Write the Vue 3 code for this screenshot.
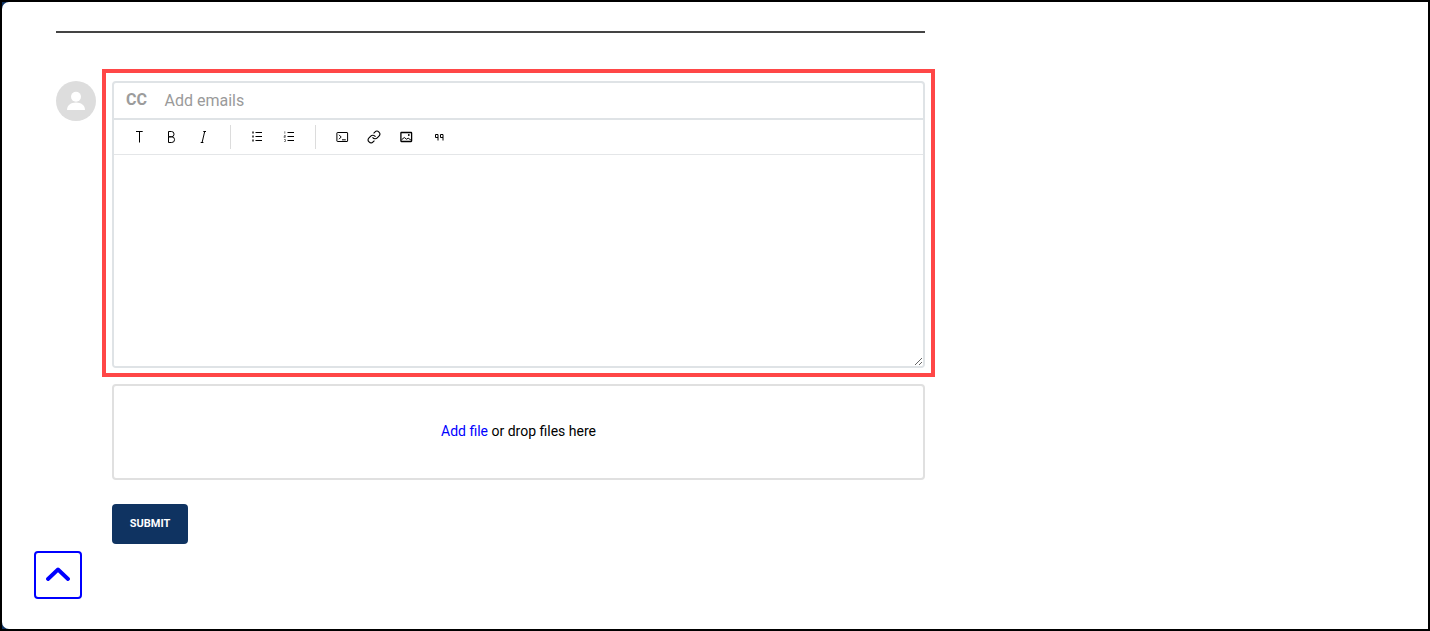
<script setup>
const groups = [
  ['t', 'b', 'i'],
  ['ul', 'ol'],
  ['code', 'link', 'image', 'quote']
]
</script>

<template>
  <div class="backdrop">
    <main class="page">
      <hr class="rule" />
      <section class="comment">
        <div class="avatar">
          <svg viewBox="0 0 40 40" width="40" height="40">
            <circle cx="20" cy="15.800" r="5" fill="#fff" />
            <path d="M11 29c0-4.800 4-7.500 9-7.500s9 2.700 9 7.500z" fill="#fff" />
          </svg>
        </div>
        <div class="body">
          <div class="highlight">
            <div class="editor">
              <div class="cc">
                <span class="cc-label">CC</span>
                <span class="cc-hint">Add emails</span>
              </div>
              <div class="composer">
                <div class="toolbar">
                  <div v-for="(group, g) in groups" :key="g" class="group">
                    <button v-for="name in group" :key="name" class="tool" type="button">
                      <svg v-if="name === 't'" viewBox="0 0 16 16" width="16" height="16"><path d="M5 2.500h6.700M8.500 2.500v11" class="line" /></svg>
                      <svg v-else-if="name === 'b'" viewBox="0 0 16 16" width="16" height="16"><path d="M5.500 2.500h2.900a2.600 2.600 0 0 1 0 5.300H5.500zM5.500 7.800h3.200a2.800 2.800 0 0 1 0 5.700H5.500z" class="line" /></svg>
                      <svg v-else-if="name === 'i'" viewBox="0 0 16 16" width="16" height="16"><path d="M8.300 2.500H11M5.700 13.500h2.700M9.700 2.500L7.100 13.500" class="line" /></svg>
                      <svg v-else-if="name === 'ul'" viewBox="0 0 16 16" width="16" height="16"><path d="M6.500 3.500H13M6.500 7.500H13M6.500 11.500H13" class="line" /><path d="M3 2.500h2v2H3zM3 6.500h2v2H3zM3 10.500h2v2H3z" class="bullet" /></svg>
                      <svg v-else-if="name === 'ol'" viewBox="0 0 16 16" width="16" height="16"><path d="M6.500 3.500H13M6.500 7.500H13M6.500 11.500H13" class="line" /><path d="M3.800 2.300v2.400M3 6.500h1.500v1H3v1h1.500M3 10.500h1.500v2H3" class="digit" /></svg>
                      <svg v-else-if="name === 'code'" viewBox="0 0 16 16" width="16" height="16"><rect x="2.900" y="3.500" width="10.700" height="9" rx=".5" class="line" /><path d="M5 5.800l2.200 2.200L5 10.200M8 10.800h3.800" class="line" /></svg>
                      <svg v-else-if="name === 'link'" viewBox="0 0 24 24" width="14" height="14"><path d="M10 13a5 5 0 0 0 7.540.54l3-3a5 5 0 0 0-7.070-7.070l-1.720 1.710M14 11a5 5 0 0 0-7.540-.54l-3 3a5 5 0 0 0 7.070 7.070l1.710-1.710" class="chain" /></svg>
                      <svg v-else-if="name === 'image'" viewBox="0 0 16 16" width="16" height="16"><rect x="2.900" y="3.500" width="10.700" height="9" rx=".5" class="heavy" /><path d="M3.500 10.800l2.800-2.300 2.200 1.700 1.700-1 2.700 1.800" class="line" /><circle cx="10.800" cy="6" r=".9" class="fill" /></svg>
                      <svg v-else viewBox="0 0 16 16" width="16" height="16"><path d="M5.500 8.500v-3h2.500v6M5.500 8.500H8M10.500 8.500v-3H13v6M10.500 8.500H13" class="line" /></svg>
                    </button>
                  </div>
                </div>
                <textarea class="input"></textarea>
              </div>
            </div>
          </div>
          <div class="dropzone">
            <span><a class="add">Add file</a> or drop files here</span>
          </div>
          <button class="submit" type="button">SUBMIT</button>
        </div>
      </section>
      <button class="top" type="button" aria-label="Back to top">
        <svg viewBox="0 0 24 14" width="24" height="14"><path d="M2 12L12 2.500 22 12" /></svg>
      </button>
    </main>
  </div>
</template>

<style>
html, body { margin: 0; padding: 0; background: #fff; }
</style>

<style scoped>
.backdrop {
  width: 1430px;
  height: 631px;
  box-sizing: border-box;
  background: #0f3361;
  border: 2px solid #000;
  overflow: hidden;
}
.page {
  position: relative;
  height: 627px;
  box-sizing: border-box;
  background: #fff;
  border-radius: 7px 0 0 7px;
  padding: 29px 54px 0;
  font-family: Roboto, "Liberation Sans", sans-serif;
}
.rule {
  width: 869px;
  height: 2px;
  margin: 0;
  border: 0;
  background: #444;
}
.comment {
  display: flex;
  margin-top: 36px;
}
.avatar {
  width: 40px;
  height: 40px;
  margin-top: 12px;
  border-radius: 50%;
  background: #dddddd;
  flex: none;
}
.avatar svg { display: block; }
.body {
  width: 813px;
  margin-left: 16px;
}
.highlight {
  width: 833px;
  height: 308px;
  box-sizing: border-box;
  margin-left: -10px;
  padding: 8px 6px 0;
  border: 4px solid #ff4747;
}
.editor {
  width: 813px;
  box-sizing: border-box;
  border: 2px solid #dfe3e6;
  border-radius: 4px;
}
.cc {
  display: flex;
  align-items: center;
  height: 35px;
  padding-left: 12px;
  border-bottom: 2px solid #dfe3e6;
}
.cc-label {
  width: 38.500px;
  padding-bottom: 2px;
  font-size: 16px;
  font-weight: 700;
  color: #9c9c9c;
}
.cc-hint {
  font-size: 16px;
  color: #9a9a9a;
}
.toolbar {
  display: flex;
  align-items: center;
  height: 35px;
  box-sizing: border-box;
  padding: 3px 0 3px 9px;
  border-bottom: 1px solid #e4e6e8;
}
.group {
  display: flex;
  height: 24px;
  padding: 0 10px 0 0;
  margin-right: 4px;
  border-right: 1px solid #dcdcdc;
}
.group:first-child { padding-right: 11px; }
.group:last-child { border-right: 0; }
.group + .group { padding-left: 6px; }
.tool {
  width: 32px;
  height: 24px;
  padding: 0;
  display: flex;
  align-items: center;
  justify-content: center;
  background: none;
  border: 0;
}
.line { fill: none; stroke: #000; stroke-width: 1; }
.heavy { fill: none; stroke: #000; stroke-width: 1.300; }
.chain { fill: none; stroke: #000; stroke-width: 1.900; stroke-linecap: round; }
.digit { fill: none; stroke: #666; stroke-width: .8; }
.bullet { fill: #555; stroke: none; }
.fill { fill: #000; stroke: none; }
.input {
  display: block;
  width: 100%;
  height: 211px;
  box-sizing: border-box;
  margin: 0;
  border: 0;
  outline: 0;
  resize: vertical;
  background: #fff;
  border-radius: 0 0 2px 2px;
}
.dropzone {
  height: 96px;
  box-sizing: border-box;
  margin-top: 7px;
  padding-bottom: 2px;
  display: flex;
  align-items: center;
  justify-content: center;
  border: 2px solid #e0e0e0;
  border-radius: 4px;
  font-size: 14px;
  color: #000;
}
.add { color: #0000ff; }
.submit {
  display: block;
  width: 76px;
  height: 40px;
  margin-top: 24px;
  padding: 0 0 2px;
  border: 0;
  border-radius: 4px;
  background: #0f3361;
  color: #fff;
  font-family: inherit;
  font-size: 11px;
  font-weight: 700;
}
.top {
  position: absolute;
  left: 32px;
  top: 549px;
  width: 48px;
  height: 48px;
  padding: 0 0 2px;
  box-sizing: border-box;
  display: flex;
  align-items: center;
  justify-content: center;
  background: #fff;
  border: 2px solid #0000ff;
  border-radius: 4px;
}
.top svg { fill: none; stroke: #0000ff; stroke-width: 3.800; stroke-linecap: round; stroke-linejoin: round; }
</style>
